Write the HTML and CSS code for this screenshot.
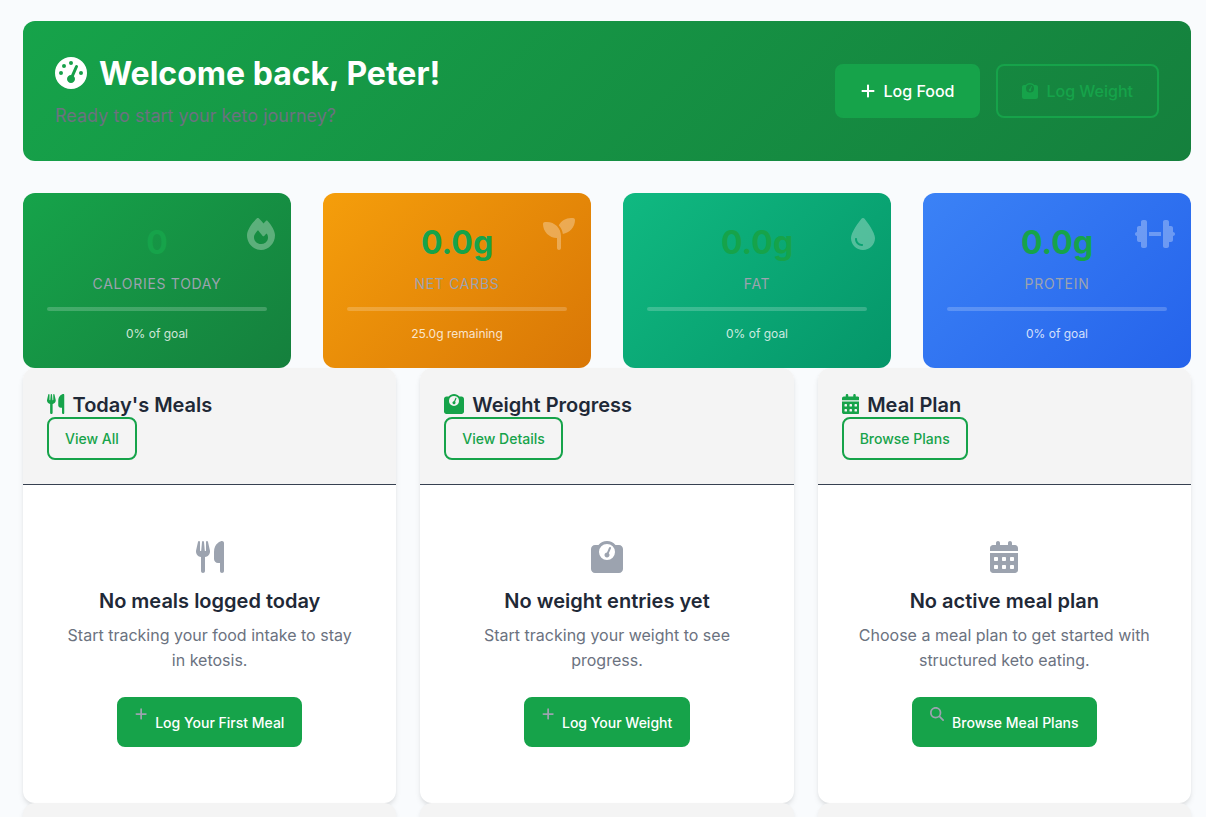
FILE: index.html
```html
<!DOCTYPE html>
<html lang="en">
<head>
<meta charset="utf-8">
<meta name="viewport" content="width=device-width, initial-scale=1">
<title>Dashboard</title>
<link rel="stylesheet" href="styles.css">
</head>
<body>
<svg class="sprite" aria-hidden="true">
  <symbol id="gauge" viewBox="0 0 512 512"><path d="M0 256a256 256 0 1 1 512 0A256 256 0 1 1 0 256zM288 96a32 32 0 1 0 -64 0 32 32 0 1 0 64 0zM256 416c35.3 0 64-28.7 64-64c0-17.4-6.9-33.1-18.1-44.6L366 161.7c5.3-12.1-.2-26.3-12.3-31.6s-26.3 .2-31.6 12.3L257.9 288c-.6 0-1.3 0-1.9 0c-35.3 0-64 28.7-64 64s28.7 64 64 64zM176 144a32 32 0 1 0 -64 0 32 32 0 1 0 64 0zM96 288a32 32 0 1 0 0-64 32 32 0 1 0 0 64zm352-32a32 32 0 1 0 -64 0 32 32 0 1 0 64 0z"/></symbol>
  <symbol id="plus" viewBox="0 0 448 512"><path d="M256 80c0-17.700-14.300-32-32-32s-32 14.300-32 32V224H48c-17.700 0-32 14.300-32 32s14.300 32 32 32H192V432c0 17.700 14.300 32 32 32s32-14.300 32-32V288H400c17.700 0 32-14.300 32-32s-14.300-32-32-32H256V80z"/></symbol>
  <symbol id="scale" viewBox="0 0 512 512"><path d="M128 176a128 128 0 1 1 256 0 128 128 0 1 1 -256 0zM391.800 64C359.500 24.900 310.700 0 256 0S152.500 24.900 120.200 64H64C28.700 64 0 92.700 0 128V448c0 35.300 28.700 64 64 64H448c35.300 0 64-28.700 64-64V128c0-35.300-28.700-64-64-64H391.800zM296 224c0-10.600-4.100-20.200-10.900-27.400l33.600-78.300c3.500-8.100-.3-17.500-8.400-21s-17.500 .3-21 8.400L255.700 184c-22 .1-39.700 18-39.700 40c0 22.100 17.900 40 40 40s40-17.900 40-40z" fill-rule="evenodd"/></symbol>
  <symbol id="fire" viewBox="0 0 448 512"><path fill-rule="evenodd" d="M159.3 5.4c7.800-7.300 19.900-7.200 27.700 .1c27.600 25.900 53.500 53.800 77.700 84c11-14.400 23.500-30.100 37-42.900c7.900-7.400 20.100-7.400 28 .1c34.600 33 63.900 76.600 84.500 118c20.300 40.800 33.800 82.500 33.800 111.900C448 404.200 348.200 512 224 512C98.400 512 0 404.100 0 276.500c0-38.400 17.800-85.300 45.400-131.700C73.300 97.700 112.700 48.600 159.300 5.400zM225.700 416c25.300 0 47.700-7 68.800-21c42.100-29.400 53.400-88.200 28.100-134.400c-4.500-9-16-9.600-22.500-2l-25.200 29.300c-6.600 7.600-18.500 7.400-24.700-.5c-16.500-21-46-58.500-62.800-79.800c-6.300-8-18.300-8.100-24.700-.1c-33.800 42.500-50.800 69.300-50.800 99.400C112 375.400 162.600 416 225.700 416z"/></symbol>
  <symbol id="seedling" viewBox="0 0 512 512"><path d="M512 32c0 113.600-84.600 207.500-194.200 222c-7.100-53.400-30.600-101.600-65.300-139.300C290.800 46.300 364 0 448 0h32c17.700 0 32 14.300 32 32zM0 96C0 78.300 14.300 64 32 64H64c123.700 0 224 100.300 224 224v32V480c0 17.700-14.300 32-32 32s-32-14.300-32-32V320C100.300 320 0 219.700 0 96z"/></symbol>
  <symbol id="droplet" viewBox="0 0 384 512"><path fill-rule="evenodd" d="M192 512C86 512 0 426 0 320C0 228.800 130.200 57.700 166.600 11.700C172.600 4.200 181.500 0 191.100 0h1.800c9.600 0 18.500 4.200 24.500 11.700C253.800 57.700 384 228.800 384 320c0 106-86 192-192 192zM96 336c0-8.800-7.200-16-16-16s-16 7.200-16 16c0 61.900 50.100 112 112 112c8.800 0 16-7.200 16-16s-7.200-16-16-16c-44.200 0-80-35.800-80-80z"/></symbol>
  <symbol id="dumbbell" viewBox="0 0 640 512"><path d="M96 64c0-17.700 14.300-32 32-32h32c17.700 0 32 14.300 32 32V224v64V448c0 17.700-14.300 32-32 32H128c-17.700 0-32-14.300-32-32V384H64c-17.700 0-32-14.300-32-32V288c-17.700 0-32-14.300-32-32s14.300-32 32-32V160c0-17.700 14.300-32 32-32H96V64zm448 0v64h32c17.700 0 32 14.300 32 32v64c17.700 0 32 14.300 32 32s-14.300 32-32 32v64c0 17.700-14.300 32-32 32H544v64c0 17.700-14.300 32-32 32H480c-17.700 0-32-14.300-32-32V288 224 64c0-17.700 14.300-32 32-32h32c17.700 0 32 14.300 32 32zM416 224v64H224V224H416z"/></symbol>
  <symbol id="utensils" viewBox="0 0 448 512"><path d="M416 0C400 0 288 32 288 176V288c0 35.300 28.700 64 64 64h32V480c0 17.700 14.300 32 32 32s32-14.300 32-32V352 240 32c0-17.700-14.300-32-32-32zM64 16C64 7.800 57.900 1 49.700 .1S34.200 4.600 32.400 12.500L2.100 148.800C.7 155.100 0 161.500 0 167.900c0 45.900 35.100 83.600 80 87.700V480c0 17.700 14.300 32 32 32s32-14.300 32-32V255.600c44.900-4.100 80-41.800 80-87.700c0-6.400-.7-12.800-2.100-19.100L191.600 12.500c-1.800-8-9.300-13.300-17.400-12.400S160 7.800 160 16V150.200c0 5.400-4.400 9.800-9.800 9.800c-5.100 0-9.300-3.900-9.800-9L127.900 14.600C127.200 6.300 120.300 0 112 0s-15.200 6.300-15.900 14.600L83.700 151c-.5 5.100-4.700 9-9.800 9c-5.400 0-9.800-4.400-9.800-9.800V16z"/></symbol>
  <symbol id="calendar" viewBox="0 0 448 512"><path fill-rule="evenodd" d="M128 0c17.700 0 32 14.300 32 32V64H288V32c0-17.700 14.300-32 32-32s32 14.300 32 32V64h48c26.500 0 48 21.500 48 48v48H0V112C0 85.500 21.500 64 48 64H96V32c0-17.700 14.300-32 32-32zM0 192H448V464c0 26.500-21.500 48-48 48H48c-26.500 0-48-21.500-48-48V192zm64 80v32c0 8.800 7.200 16 16 16h32c8.800 0 16-7.200 16-16V272c0-8.800-7.200-16-16-16H80c-8.800 0-16 7.200-16 16zm128 0v32c0 8.800 7.200 16 16 16h32c8.800 0 16-7.200 16-16V272c0-8.800-7.200-16-16-16H208c-8.800 0-16 7.200-16 16zm144-16c-8.800 0-16 7.200-16 16v32c0 8.800 7.200 16 16 16h32c8.800 0 16-7.200 16-16V272c0-8.800-7.200-16-16-16H336zM64 400v32c0 8.800 7.200 16 16 16h32c8.800 0 16-7.200 16-16V400c0-8.800-7.200-16-16-16H80c-8.800 0-16 7.200-16 16zm144-16c-8.800 0-16 7.200-16 16v32c0 8.800 7.200 16 16 16h32c8.800 0 16-7.200 16-16V400c0-8.800-7.200-16-16-16H208zm112 16v32c0 8.800 7.200 16 16 16h32c8.800 0 16-7.200 16-16V400c0-8.800-7.200-16-16-16H336c-8.800 0-16 7.200-16 16z"/></symbol>
  <symbol id="search" viewBox="0 0 512 512"><path d="M416 208c0 45.900-14.900 88.300-40 122.700L502.600 457.400c12.500 12.500 12.500 32.800 0 45.300s-32.800 12.500-45.300 0L330.700 376c-34.400 25.200-76.800 40-122.700 40C93.100 416 0 322.900 0 208S93.100 0 208 0S416 93.100 416 208zM208 352a144 144 0 1 0 0-288 144 144 0 1 0 0 288z"/></symbol>
</svg>

<main class="page">
  <section class="hero">
    <div>
      <h1 class="hero-title"><svg class="hero-icon" viewBox="0 0 512 512" aria-hidden="true"><use href="#gauge"/></svg>Welcome back, Peter!</h1>
      <p class="hero-text">Ready to start your keto journey?</p>
    </div>
    <div class="hero-actions">
      <a class="btn btn-primary" href="#log-food"><svg class="btn-icon" viewBox="0 0 448 512" aria-hidden="true"><use href="#plus"/></svg>Log Food</a>
      <a class="btn btn-outline" href="#log-weight"><svg class="btn-icon" viewBox="0 0 512 512" aria-hidden="true"><use href="#scale"/></svg>Log Weight</a>
    </div>
  </section>

  <section class="stats" aria-label="Today">
    <article class="stat stat-calories">
      <svg class="stat-icon" viewBox="0 0 448 512" aria-hidden="true"><use href="#fire"/></svg>
      <div class="stat-value">0</div>
      <div class="stat-label">Calories Today</div>
      <div class="stat-bar" role="progressbar" aria-label="Calories" aria-valuenow="0" aria-valuemin="0" aria-valuemax="100"></div>
      <div class="stat-note">0% of goal</div>
    </article>
    <article class="stat stat-carbs">
      <svg class="stat-icon" viewBox="0 0 512 512" aria-hidden="true"><use href="#seedling"/></svg>
      <div class="stat-value">0.0g</div>
      <div class="stat-label">Net Carbs</div>
      <div class="stat-bar" role="progressbar" aria-label="Net carbs" aria-valuenow="0" aria-valuemin="0" aria-valuemax="100"></div>
      <div class="stat-note">25.0g remaining</div>
    </article>
    <article class="stat stat-fat">
      <svg class="stat-icon" viewBox="0 0 384 512" aria-hidden="true"><use href="#droplet"/></svg>
      <div class="stat-value">0.0g</div>
      <div class="stat-label">Fat</div>
      <div class="stat-bar" role="progressbar" aria-label="Fat" aria-valuenow="0" aria-valuemin="0" aria-valuemax="100"></div>
      <div class="stat-note">0% of goal</div>
    </article>
    <article class="stat stat-protein">
      <svg class="stat-icon" viewBox="0 0 640 512" aria-hidden="true"><use href="#dumbbell"/></svg>
      <div class="stat-value">0.0g</div>
      <div class="stat-label">Protein</div>
      <div class="stat-bar" role="progressbar" aria-label="Protein" aria-valuenow="0" aria-valuemin="0" aria-valuemax="100"></div>
      <div class="stat-note">0% of goal</div>
    </article>
  </section>

  <section class="panels">
    <article class="panel">
      <header class="panel-head">
        <h2 class="panel-title"><svg class="title-icon" viewBox="0 0 448 512" aria-hidden="true"><use href="#utensils"/></svg>Today's Meals</h2>
        <a class="btn btn-outline btn-small" href="#meals">View All</a>
      </header>
      <div class="empty">
        <svg class="empty-icon" viewBox="0 0 448 512" aria-hidden="true"><use href="#utensils"/></svg>
        <h3 class="empty-title">No meals logged today</h3>
        <p class="empty-text">Start tracking your food intake to stay in ketosis.</p>
        <a class="btn btn-primary btn-small btn-empty" href="#log-food"><svg class="btn-icon" viewBox="0 0 448 512" aria-hidden="true"><use href="#plus"/></svg>Log Your First Meal</a>
      </div>
    </article>
    <article class="panel">
      <header class="panel-head">
        <h2 class="panel-title"><svg class="title-icon" viewBox="0 0 512 512" aria-hidden="true"><use href="#scale"/></svg>Weight Progress</h2>
        <a class="btn btn-outline btn-small" href="#weight">View Details</a>
      </header>
      <div class="empty">
        <svg class="empty-icon" viewBox="0 0 512 512" aria-hidden="true"><use href="#scale"/></svg>
        <h3 class="empty-title">No weight entries yet</h3>
        <p class="empty-text">Start tracking your weight to see progress.</p>
        <a class="btn btn-primary btn-small btn-empty" href="#log-weight"><svg class="btn-icon" viewBox="0 0 448 512" aria-hidden="true"><use href="#plus"/></svg>Log Your Weight</a>
      </div>
    </article>
    <article class="panel">
      <header class="panel-head">
        <h2 class="panel-title"><svg class="title-icon" viewBox="0 0 448 512" aria-hidden="true"><use href="#calendar"/></svg>Meal Plan</h2>
        <a class="btn btn-outline btn-small" href="#plans">Browse Plans</a>
      </header>
      <div class="empty">
        <svg class="empty-icon" viewBox="0 0 448 512" aria-hidden="true"><use href="#calendar"/></svg>
        <h3 class="empty-title">No active meal plan</h3>
        <p class="empty-text">Choose a meal plan to get started with structured keto eating.</p>
        <a class="btn btn-primary btn-small btn-empty" href="#plans"><svg class="btn-icon" viewBox="0 0 512 512" aria-hidden="true"><use href="#search"/></svg>Browse Meal Plans</a>
      </div>
    </article>
    <div class="panel panel-next"></div>
    <div class="panel panel-next"></div>
    <div class="panel panel-next"></div>
  </section>
</main>
</body>
</html>
```

FILE: styles.css
```css
* {
  box-sizing: border-box;
}

body {
  margin: 0;
  background: #f9fbfd;
  color: #1f2937;
  font-family: Inter, "Liberation Sans", sans-serif;
  font-size: 16px;
  line-height: 26px;
}

h1, h2, h3, p {
  margin: 0;
}

svg {
  fill: currentColor;
  flex: none;
}

.sprite {
  display: none;
}

.page {
  padding: 21px 15px 0 23px;
}

/* Welcome banner */
.hero {
  display: flex;
  align-items: center;
  justify-content: space-between;
  gap: 24px;
  padding: 32px;
  margin-bottom: 32px;
  border-radius: 12px;
  background: linear-gradient(135deg, #16a34a, #15803d);
}

.hero-title {
  display: flex;
  align-items: center;
  gap: 12px;
  margin-bottom: 8px;
  color: #fff;
  font-size: 32px;
  font-weight: 700;
  line-height: 42px;
}

.hero-icon {
  height: 32px;
  margin-bottom: 2px;
}

.hero-text {
  color: #6b7280;
  font-size: 18px;
  line-height: 26px;
}

.hero-actions {
  display: flex;
  gap: 16px;
}

/* Buttons */
.btn {
  display: inline-flex;
  align-items: center;
  gap: 8px;
  padding: 12px 24px;
  border: 2px solid #16a34a;
  border-radius: 8px;
  font-weight: 500;
  text-decoration: none;
}

.btn-primary {
  background: #16a34a;
  color: #fff;
}

.btn-outline {
  color: #16a34a;
}

.btn-icon {
  height: 16px;
}

.btn-small {
  padding: 8px 16px;
  font-size: 14px;
  line-height: 23px;
}

/* Daily totals */
.stats {
  display: grid;
  grid-template-columns: repeat(4, 1fr);
  gap: 32px;
}

.stat {
  position: relative;
  padding: 24px;
  border-radius: 12px;
  text-align: center;
}

.stat-calories {
  background: linear-gradient(135deg, #16a34a, #15803d);
}

.stat-carbs {
  background: linear-gradient(135deg, #f59e0b, #d97706);
}

.stat-fat {
  background: linear-gradient(135deg, #10b981, #059669);
}

.stat-protein {
  background: linear-gradient(135deg, #3b82f6, #2563eb);
}

.stat-icon {
  position: absolute;
  top: 25px;
  right: 16px;
  height: 32px;
  color: #fff;
  opacity: 0.3;
}

.stat-value {
  margin-bottom: 4px;
  color: #16a34a;
  font-size: 32px;
  font-weight: 700;
  line-height: 51px;
}

.stat-label {
  margin-bottom: 12px;
  color: #9ca3af;
  font-size: 14px;
  letter-spacing: 0.05em;
  line-height: 23px;
  text-transform: uppercase;
}

.stat-bar {
  height: 4px;
  margin-bottom: 12px;
  border-radius: 2px;
  background: rgba(255, 255, 255, 0.2);
}

.stat-note {
  color: rgba(255, 255, 255, 0.8);
  font-size: 12px;
  line-height: 21px;
}

/* Panels */
.panels {
  display: grid;
  grid-template-columns: repeat(3, 1fr);
  column-gap: 24px;
}

.panel {
  overflow: hidden;
  border-radius: 12px;
  background: #fff;
  box-shadow: 0 4px 6px -1px rgba(0, 0, 0, 0.1), 0 2px 4px -1px rgba(0, 0, 0, 0.06);
}

.panel-next {
  height: 14px;
  border-radius: 12px 12px 0 0;
  background: #f4f4f4;
}

.panel-head {
  padding: 25px 24px 24px;
  border-bottom: 1px solid #374151;
  background: #f4f4f4;
}

.panel-title {
  display: flex;
  align-items: center;
  gap: 8px;
  font-size: 20px;
  font-weight: 600;
  line-height: 24px;
}

.title-icon {
  height: 20px;
  margin-bottom: 2px;
  color: #16a34a;
}

.panel-head .btn {
  display: flex;
  width: fit-content;
}

.empty {
  display: flex;
  flex-direction: column;
  align-items: center;
  padding: 56px 40px;
  text-align: center;
}

.empty-icon {
  height: 32px;
  margin-bottom: 16px;
  color: #9ca3af;
}

.empty-title {
  margin-bottom: 10px;
  font-size: 20px;
  font-weight: 600;
  line-height: 24px;
}

.empty-text {
  margin-bottom: 24px;
  color: #6b7280;
  line-height: 25px;
}

.btn-empty .btn-icon {
  height: 14px;
  margin-bottom: 16px;
  color: #9ca3af;
}
```
